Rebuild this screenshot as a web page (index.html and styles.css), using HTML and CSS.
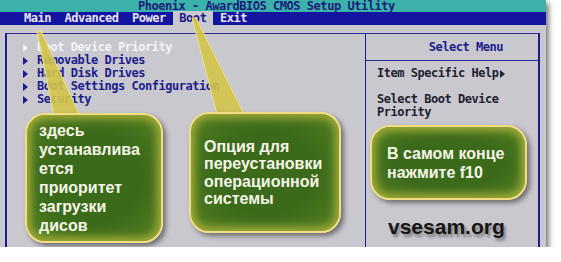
FILE: index.html
```html
<!DOCTYPE html>
<html lang="ru">

<head>
    <meta charset="UTF-8" />
    <title>Phoenix - AwardBIOS CMOS Setup Utility</title>
    <link rel="stylesheet" href="styles.css">
</head>

<body>
    <div class="screen">
        <div class="title">Phoenix - AwardBIOS CMOS Setup Utility</div>
        <div class="menubar">Main  Advanced  Power <span class="sel"> Boot </span> Exit</div>

        <div class="panels">
            <!-- Left: menu items -->
            <div class="main-panel">
                <ul class="items">
                    <li class="active"><i class="tri"></i>Boot Device Priority</li>
                    <li><i class="tri"></i>Removable Drives</li>
                    <li><i class="tri"></i>Hard Disk Drives</li>
                    <li><i class="tri"></i>Boot Settings Configuration</li>
                    <li><i class="tri"></i>Security</li>
                </ul>
            </div>

            <!-- Right: help -->
            <div class="help-panel">
                <div class="help-head">Select Menu</div>
                <div class="help-body">
                    <p>Item Specific Help<i class="tri"></i></p>
                    <p class="gap">Select Boot Device<br>Priority</p>
                </div>
            </div>
        </div>

        <!-- callout pointers -->
        <svg class="pointers" width="546" height="247" viewBox="0 0 546 247">
            <polygon points="37,31 41,31 80,116 54,116" />
            <polygon points="192,18 196,18 244,114 217,114" />
        </svg>

        <div class="callout c1">
            <p>здесь<br>устанавлива<br>ется<br>приоритет<br>загрузки<br>дисов</p>
        </div>
        <div class="callout c2">
            <p>Опция для<br>переустановки<br>операционной<br>системы</p>
        </div>
        <div class="callout c3">
            <p>В самом конце<br>нажмите f10</p>
        </div>

        <div class="watermark">vsesam.org</div>
    </div>
</body>

</html>
```

FILE: styles.css
```css
body {
    margin: 0;
    background-color: white;
}

.screen {
    position: relative;
    width: 546px;
    height: 247px;
    display: flex;
    flex-direction: column;
    background-color: #c8c8ce;
    box-shadow: 3px 3px 5px rgba(0, 0, 0, 0.5);
    font-family: "DejaVu Sans Mono", monospace;
    font-weight: bold;
    font-size: 12px;
    letter-spacing: -0.47px;
    line-height: 13px;
    white-space: nowrap;
}

.title {
    height: 12px;
    line-height: 12px;
    padding-left: 138px;
    background-color: #3ab2aa;
    color: #1a1a7c;
}

.menubar {
    height: 13px;
    padding-left: 24px;
    background-color: #1414a0;
    color: #e6e6f0;
    white-space: pre;
}

.menubar .sel {
    background-color: #c8c8ce;
    color: #1c1c8c;
}

.panels {
    flex: 1;
    display: flex;
    margin: 8px 6px 0 5px;
    border-top: 1px solid #2a2a92;
    border-left: 2px solid #1c1c8c;
    border-right: 2px solid #1c1c8c;
}

.main-panel {
    width: 342px;
    padding: 7px 0 0 16px;
    color: #1c1c8c;
}

.items {
    list-style: none;
    margin: 0;
    padding: 0;
}

.items li {
    display: flex;
    align-items: center;
    height: 13px;
}

.items li.active {
    color: #f4f4f8;
}

.tri {
    width: 0;
    height: 0;
    border-left: 5px solid currentColor;
    border-top: 4px solid transparent;
    border-bottom: 4px solid transparent;
    margin-right: 9px;
}

.help-panel {
    flex: 1;
    border-left: 1px solid #1c1c8c;
    color: #1c1c8c;
}

.help-head {
    padding: 7px 35px 6px 0;
    text-align: right;
    border-bottom: 1px solid #2a2a92;
}

.help-body {
    padding: 6px 0 0 11px;
    color: #202030;
}

.help-body p {
    margin: 0;
    display: flex;
    align-items: center;
}

.help-body p .tri {
    margin: 0 0 0 1px;
    border-left-color: #202030;
}

.help-body p.gap {
    display: block;
    margin-top: 13px;
}

.pointers {
    position: absolute;
    left: 0;
    top: 0;
}

.pointers polygon {
    fill: #d2c44a;
    fill-opacity: 0.9;
    stroke: #f0e28c;
    stroke-width: 1;
}

.callout {
    position: absolute;
    display: flex;
    align-items: center;
    box-sizing: border-box;
    background: radial-gradient(ellipse at center, #3b6a1b 50%, #55801f 100%);
    border: 2px solid #f0de84;
    border-radius: 20px;
    box-shadow: inset 0 0 8px 4px #a3ac3a, 3px 3px 5px rgba(0, 0, 0, 0.45);
    font-family: "Liberation Sans", Arial, sans-serif;
    font-size: 16px;
    font-weight: bold;
    letter-spacing: 0;
    color: #f6f6e8;
}

.callout p {
    margin: 0;
}

.c1 {
    left: 25px;
    top: 113px;
    width: 138px;
    height: 130px;
    padding-left: 12px;
    line-height: 19px;
}

.c2 {
    left: 189px;
    top: 112px;
    width: 152px;
    height: 121px;
    padding-left: 13px;
    line-height: 17.5px;
}

.c3 {
    left: 370px;
    top: 125px;
    width: 157px;
    height: 75px;
    padding-left: 15px;
    line-height: 19px;
}

.watermark {
    position: absolute;
    left: 388px;
    top: 214px;
    font-family: "Liberation Sans", Arial, sans-serif;
    font-size: 21px;
    line-height: 26px;
    letter-spacing: 0;
    color: #151515;
    text-shadow: 2px 3px 3px rgba(0, 0, 0, 0.4);
}
```
